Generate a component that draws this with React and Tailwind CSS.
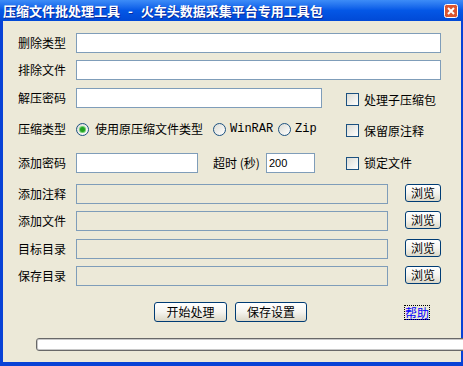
import React from 'react';

const Checkbox = ({ label, className = '' }) => (
  <div className={`flex items-center gap-[5px] ${className}`}>
    <span className="w-[13px] h-[13px] border border-[#1c5180] bg-[#f0f0ea] bg-linear-to-br from-[#dcdcd5] to-white" />
    <span>{label}</span>
  </div>
);

const Radio = ({ label, checked, mono, className = '' }) => (
  <div className={`flex items-center ${className}`}>
    <span className="w-[13px] h-[13px] rounded-full border border-[#1c5180] bg-[#f0f0ea] bg-linear-to-br from-[#dcdcd5] to-white flex items-center justify-center">
      {checked && <span className="w-[5px] h-[5px] rounded-full bg-[#21a121] shadow-[0_0_0_1px_#6fd36f]" />}
    </span>
    <span className={mono ? "ml-[4px] font-['Liberation_Mono',monospace] text-[12px]" : 'ml-[6px]'}>{label}</span>
  </div>
);

const Field = ({ width, value, disabled }) => (
  <input
    readOnly
    value={value || ''}
    className={`h-[20px] border border-[#7f9db9] px-[2px] outline-none font-['Liberation_Sans',sans-serif] text-[11px] text-black ${
      disabled ? 'bg-[#ece9d8]' : 'bg-white'
    } ${width}`}
  />
);

const XpButton = ({ children, width, height = 'h-[20px]' }) => (
  <button className={`${width} ${height} rounded-[3px] border border-[#003c74] bg-[#f6f5f0] bg-linear-to-b from-white via-[#f5f4ef] to-[#dcd8c8] flex items-center justify-center text-[12px] text-black`}>
    {children}
  </button>
);

const Label = ({ children }) => <span className="w-[58px] shrink-0">{children}</span>;

export default function App() {
  const browseRows = ['添加注释', '添加文件', '目标目录', '保存目录'];
  const gaps = ['mt-[11px]', 'mt-[7px]', 'mt-[8px]', 'mt-[7px]'];

  return (
    <div className="w-[463px] h-[366px] overflow-hidden bg-[#0842d6] flex flex-col font-['Noto_Sans_CJK_SC',sans-serif] text-[12px] text-black">
      {/* Title bar */}
      <div className="h-[21px] shrink-0 flex items-center justify-between pl-[3px] pr-[5px] bg-[#0457e6] bg-linear-to-b from-[#3d8cf7] via-[#0457e6] to-[#0149d6]">
        <div className="flex items-center text-white font-bold text-[13px] leading-none [text-shadow:1px_1px_0_#0a2a9a]">
          <span>压缩文件批处理工具</span>
          <span className="mx-[8px]">-</span>
          <span>火车头数据采集平台专用工具包</span>
        </div>
        <svg width="14" height="14" viewBox="0 0 14 14" className="shrink-0">
          <rect x="0.5" y="0.5" width="13" height="13" rx="2" fill="#dc5530" stroke="#ffffff" />
          <path d="M4 4 L10 10 M10 4 L4 10" stroke="white" strokeWidth="2" />
        </svg>
      </div>

      {/* Client area */}
      <div className="flex-1 ml-[3px] mr-[2px] mb-[4px] bg-[#ece9d8] flex flex-col pl-[15px]">
        <div className="flex items-center h-[20px] mt-[12px]">
          <Label>删除类型</Label>
          <Field width="w-[365px]" />
        </div>
        <div className="flex items-center h-[20px] mt-[7px]">
          <Label>排除文件</Label>
          <Field width="w-[365px]" />
        </div>
        <div className="flex items-center h-[20px] mt-[8px]">
          <Label>解压密码</Label>
          <Field width="w-[246px]" />
          <Checkbox label="处理子压缩包" className="ml-[24px] mt-[3px]" />
        </div>
        <div className="flex items-center h-[20px] mt-[11px]">
          <Label>压缩类型</Label>
          <Radio label="使用原压缩文件类型" checked className="w-[137px]" />
          <Radio label="WinRAR" mono className="w-[65px]" />
          <Radio label="Zip" mono className="w-[68px]" />
          <Checkbox label="保留原注释" className="mt-[3px]" />
        </div>
        <div className="flex items-center h-[20px] mt-[14px]">
          <Label>添加密码</Label>
          <Field width="w-[122px]" />
          <span className="ml-[15px] w-[53px]">超时 (秒)</span>
          <Field width="w-[49px]" value="200" />
          <Checkbox label="锁定文件" className="ml-[31px]" />
        </div>

        {browseRows.map((label, i) => (
          <div key={label} className={`flex items-center h-[20px] ${gaps[i]}`}>
            <Label>{label}</Label>
            <Field width="w-[312px]" disabled />
            <div className="ml-[17px] -mt-[3px]">
              <XpButton width="w-[36px]" height="h-[18px]">浏览</XpButton>
            </div>
          </div>
        ))}

        <div className="flex items-center h-[20px] mt-[16px] pl-[136px]">
          <XpButton width="w-[73px]">开始处理</XpButton>
          <div className="ml-[8px]">
            <XpButton width="w-[72px]">保存设置</XpButton>
          </div>
          <a className="ml-[98px] text-[#0000ff] underline outline-1 outline-dotted outline-black leading-[13px]">帮助</a>
        </div>

        <div className="mt-[16px] ml-[18px] h-[13px] w-[430px] shrink-0 rounded-[3px] border border-[#686868] bg-white shadow-[inset_0_0_0_1px_#c8c8c8]" />
      </div>
    </div>
  );
}
